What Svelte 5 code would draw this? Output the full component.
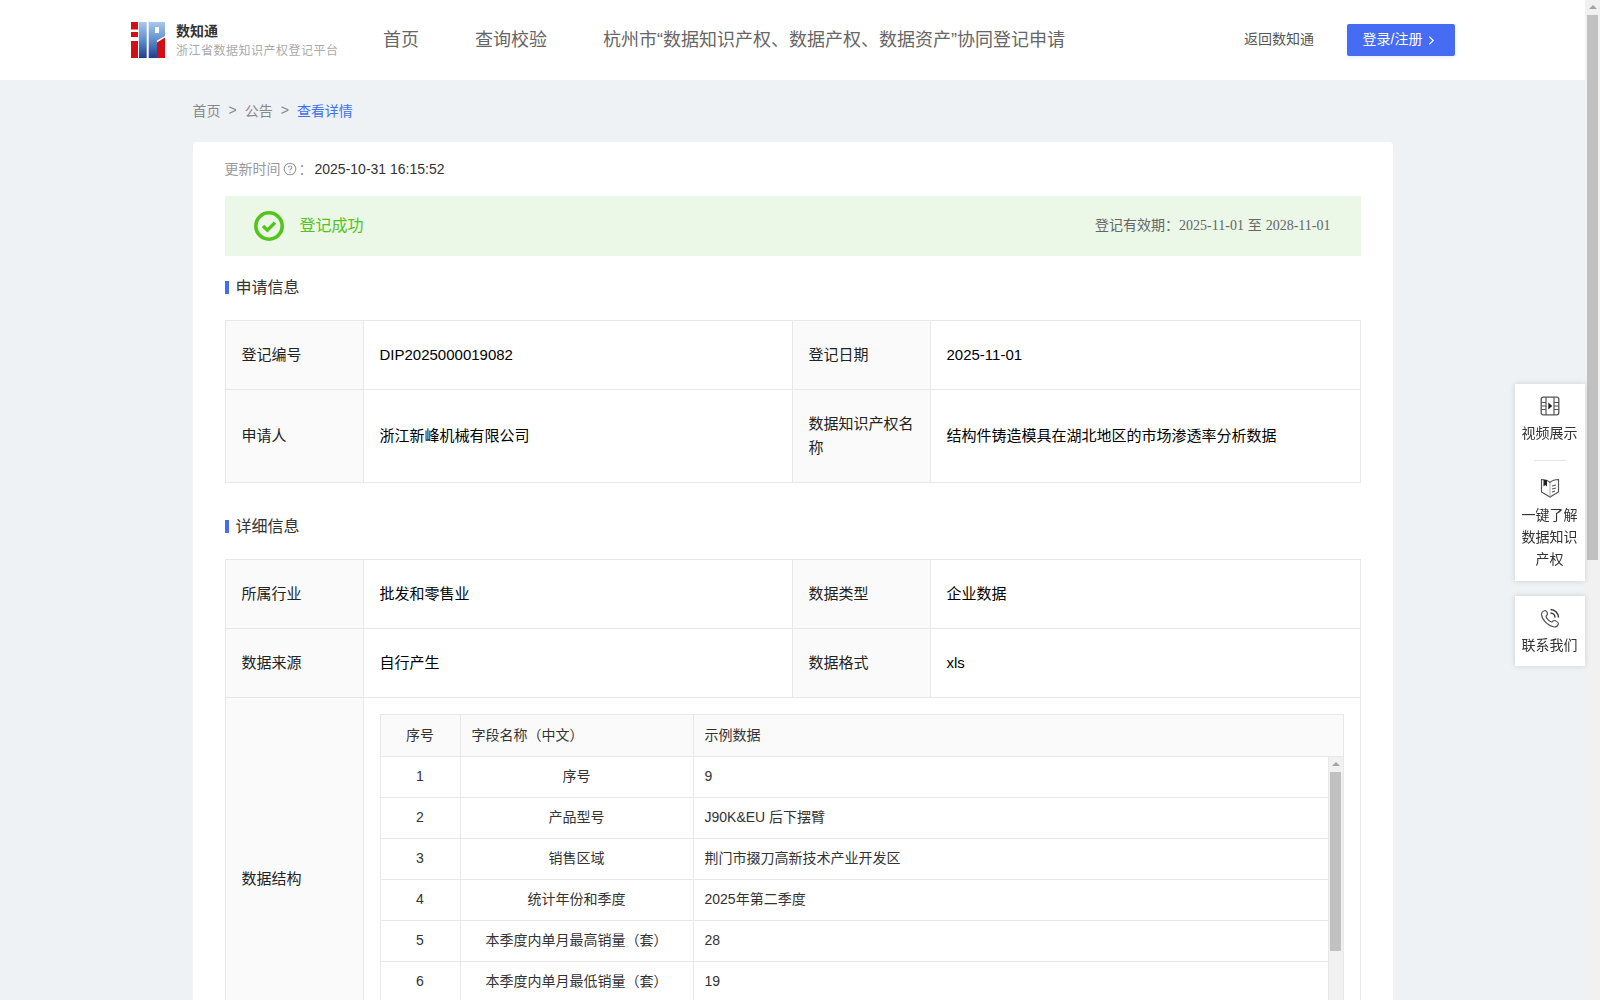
<script>
  const infoRows = [
    { n: 1, name: '序号', value: '9' },
    { n: 2, name: '产品型号', value: 'J90K&EU 后下摆臂' },
    { n: 3, name: '销售区域', value: '荆门市掇刀高新技术产业开发区' },
    { n: 4, name: '统计年份和季度', value: '2025年第二季度' },
    { n: 5, name: '本季度内单月最高销量（套）', value: '28' },
    { n: 6, name: '本季度内单月最低销量（套）', value: '19' }
  ];
</script>

<div class="shell">
  <div class="page">
    <header>
      <div class="brand">
        <svg class="logo" viewBox="0 0 34 36" width="34" height="36">
          <defs>
            <linearGradient id="blue" x1="0" y1="0" x2="0" y2="1">
              <stop offset="0" stop-color="#a9c8ec" />
              <stop offset="0.5" stop-color="#5f8fd0" />
              <stop offset="1" stop-color="#1f3c8c" />
            </linearGradient>
          </defs>
          <rect x="0" y="0" width="7" height="7.500" fill="#d40f14" />
          <rect x="0" y="10" width="7" height="5" fill="#d40f14" />
          <rect x="0" y="19" width="7" height="17" fill="#d40f14" />
          <rect x="8" y="0" width="7.700" height="36" fill="url(#blue)" />
          <path d="M17.700 0H34V14L26 18.500V36H17.700Z" fill="url(#blue)" />
          <rect x="24" y="5" width="4" height="6" fill="#fff" />
          <path d="M26 20.500L34 15.500V36H26Z" fill="#d40f14" />
        </svg>
        <div class="brand-text">
          <div class="brand-name">数知通</div>
          <div class="brand-sub">浙江省数据知识产权登记平台</div>
        </div>
      </div>
      <nav>
        <a href="#home">首页</a>
        <a href="#check">查询校验</a>
        <a href="#apply">杭州市“数据知识产权、数据产权、数据资产”协同登记申请</a>
      </nav>
      <div class="actions">
        <a class="back" href="#back">返回数知通</a>
        <button class="login">登录/注册
          <svg viewBox="0 0 8 12" width="7" height="11"><path d="M1.500 1.500L6 6L1.500 10.500" fill="none" stroke="#fff" stroke-width="1.400" /></svg>
        </button>
      </div>
    </header>

    <main>
      <div class="crumbs">
        <span>首页</span><i>&gt;</i><span>公告</span><i>&gt;</i><span class="current">查看详情</span>
      </div>

      <section class="card">
        <div class="updated">
          <span class="muted">更新时间</span>
          <svg viewBox="0 0 14 14" width="14" height="14">
            <circle cx="7" cy="7" r="5.800" fill="none" stroke="#999" stroke-width="1.100" />
            <path d="M5.300 5.600C5.300 3.400 8.800 3.500 8.800 5.600C8.800 7 7 6.900 7 8.400" fill="none" stroke="#999" stroke-width="1.100" />
            <circle cx="7" cy="10.100" r="0.700" fill="#999" />
          </svg>
          <span class="muted colon">：</span>
          <span>2025-10-31 16:15:52</span>
        </div>

        <div class="banner">
          <div class="status">
            <svg viewBox="0 0 30 30" width="30" height="30">
              <circle cx="15" cy="15" r="13.200" fill="none" stroke="#52c41a" stroke-width="3.600" />
              <path d="M9 15L13.400 19.200L21 11.600" fill="none" stroke="#52c41a" stroke-width="3.400" />
            </svg>
            <span>登记成功</span>
          </div>
          <div class="validity">登记有效期：<em>2025-11-01</em> 至 <em>2028-11-01</em></div>
        </div>

        <h3>申请信息</h3>
        <div class="grid">
          <div class="label">登记编号</div>
          <div class="value">DIP2025000019082</div>
          <div class="label">登记日期</div>
          <div class="value">2025-11-01</div>
          <div class="label">申请人</div>
          <div class="value">浙江新峰机械有限公司</div>
          <div class="label">数据知识产权名称</div>
          <div class="value">结构件铸造模具在湖北地区的市场渗透率分析数据</div>
        </div>

        <h3 class="second">详细信息</h3>
        <div class="grid">
          <div class="label">所属行业</div>
          <div class="value">批发和零售业</div>
          <div class="label">数据类型</div>
          <div class="value">企业数据</div>
          <div class="label">数据来源</div>
          <div class="value">自行产生</div>
          <div class="label">数据格式</div>
          <div class="value">xls</div>
          <div class="label">数据结构</div>
          <div class="value wide">
            <div class="fields">
              <div class="fields-head">
                <div class="c1">序号</div>
                <div class="c2 left">字段名称（中文）</div>
                <div class="c3">示例数据</div>
              </div>
              <div class="fields-body">
                <div class="fields-rows">
                  {#each infoRows as row}
                    <div class="fields-row">
                      <div class="c1">{row.n}</div>
                      <div class="c2">{row.name}</div>
                      <div class="c3">{row.value}</div>
                    </div>
                  {/each}
                </div>
                <div class="inner-bar">
                  <div class="arrow"></div>
                  <div class="inner-thumb"></div>
                </div>
              </div>
            </div>
          </div>
        </div>
      </section>
    </main>
  </div>

  <div class="page-bar">
    <div class="arrow"></div>
    <div class="page-thumb"></div>
  </div>
</div>

<aside>
  <div class="side-box">
    <button class="side-item">
      <svg viewBox="0 0 20 20" width="20" height="20">
        <rect x="1.200" y="1.200" width="17.600" height="17.600" rx="2" fill="none" stroke="#555" stroke-width="1.300" />
        <path d="M6 1V19M14 1V19M1 6.500H6M1 10H6M1 13.500H6M14 6.500H19M14 10H19M14 13.500H19" fill="none" stroke="#555" stroke-width="1.200" />
        <path d="M8.300 6.500L12.300 10L8.300 13.500Z" fill="#222" />
      </svg>
      <span>视频展示</span>
    </button>
    <div class="side-line"></div>
    <button class="side-item">
      <svg viewBox="0 0 20 20" width="20" height="20">
        <path d="M1.500 1.500C4.500 1.500 8 2.500 10 4.500C12 2.500 15.500 1.500 18.500 1.500V14L10 19L1.500 14Z" fill="none" stroke="#555" stroke-width="1.200" />
        <path d="M10 4.500V19" fill="none" stroke="#999" stroke-width="0.800" />
        <path d="M3.500 2H7V8.500L5.200 7L3.500 8.500Z" fill="#222" />
        <path d="M12 8L16 7M12 11L16 10M12 14L15 13" fill="none" stroke="#555" stroke-width="1.200" />
      </svg>
      <span>一键了解数据知识产权</span>
    </button>
  </div>
  <div class="side-box">
    <button class="side-item">
      <svg viewBox="0 0 20 20" width="20" height="20">
        <path d="M5 2.500C3 3 1.500 4.500 1.500 6.500C2 12 8.500 18.500 14.500 19C16.500 19 18 17.500 18.500 15.500C18.500 14.500 15.500 12.500 14 12.500C13 12.500 12.500 14 11.500 14C9.500 13.500 6.500 10.500 6 8.500C6 7.500 7.500 7 7.500 6C7.500 4.500 6 2.500 5 2.500Z" fill="none" stroke="#555" stroke-width="1.200" />
        <path d="M10.500 5C13 5 15 7 15 9.500M10.500 1.500C14.500 1.500 18.500 5 18.500 9.500" fill="none" stroke="#333" stroke-width="1.500" />
      </svg>
      <span>联系我们</span>
    </button>
  </div>
</aside>

<style>
  :global(body) {
    background: #eef2f5;
    font-family: 'Liberation Sans', 'Noto Sans CJK SC', sans-serif;
    color: #333;
  }

  .shell {
    display: flex;
    height: 100vh;
    overflow: hidden;
  }

  .page {
    flex: 1;
    min-width: 0;
  }

  .page-bar {
    width: 15px;
    background: #f1f1f1;
    display: flex;
    flex-direction: column;
    align-items: center;
  }

  .arrow {
    flex: none;
    width: 0;
    height: 0;
    margin: 5px 0 6px;
    border: solid transparent;
    border-width: 0 4px 4px;
    border-bottom-color: #a3a3a3;
  }

  .page-thumb {
    width: 11px;
    height: 545px;
    background: #c1c1c1;
  }

  header {
    height: 80px;
    background: #fff;
    display: flex;
    align-items: center;
    padding: 0 130px 0 131px;
  }

  .brand {
    display: flex;
    align-items: center;
    gap: 11px;
    width: 252px;
  }

  .brand-name {
    font-size: 14px;
    font-weight: 700;
    line-height: 20px;
    padding-top: 1px;
  }

  .brand-sub {
    font-size: 12px;
    letter-spacing: 0.5px;
    line-height: 20px;
    color: #aaa;
  }

  nav {
    display: flex;
    gap: 56px;
    flex: 1;
    padding-bottom: 4px;
  }

  nav a {
    font-size: 18px;
    color: #666;
    text-decoration: none;
  }

  .actions {
    display: flex;
    align-items: center;
    gap: 33px;
  }

  .back {
    font-size: 14px;
    color: #555;
    text-decoration: none;
    padding-bottom: 4px;
  }

  .login {
    width: 108px;
    height: 32px;
    border: 0;
    border-radius: 2px;
    background: #456cf2;
    color: #fff;
    font: inherit;
    font-size: 14px;
    display: flex;
    align-items: center;
    justify-content: center;
    gap: 6px;
    padding: 0 4px 5px 0;
    box-shadow: 0 2px 4px rgba(69, 108, 242, 0.1);
  }

  .login svg {
    margin-top: 5px;
  }

  main {
    width: 1200px;
    margin: 0 auto;
  }

  .crumbs {
    height: 62px;
    box-sizing: border-box;
    padding-bottom: 3px;
    display: flex;
    align-items: center;
    font-size: 14px;
    color: #888;
  }

  .crumbs i {
    font-style: normal;
    margin: 0 8px;
  }

  .current {
    color: #3f6ef5;
  }

  .card {
    background: #fff;
    border-radius: 4px;
    padding: 0 32px 32px;
  }

  .updated {
    height: 54px;
    display: flex;
    align-items: center;
    font-size: 14px;
    gap: 2px;
  }

  .muted {
    color: #999;
    padding-bottom: 3px;
  }

  .colon {
    width: 14px;
  }

  .banner {
    height: 60px;
    background: #ebf7e7;
    display: flex;
    align-items: center;
    justify-content: space-between;
    padding: 0 30px 0 29px;
  }

  .status {
    display: flex;
    align-items: center;
    gap: 16px;
    font-size: 16px;
    color: #52c41a;
  }

  .status span {
    padding-bottom: 4px;
  }

  .validity {
    font-size: 14px;
    color: #666;
    padding-bottom: 4px;
  }

  .validity em {
    font-style: normal;
    font-family: 'Liberation Serif', serif;
  }

  h3 {
    margin: 0;
    height: 60px;
    padding-bottom: 4px;
    display: flex;
    align-items: center;
    gap: 7px;
    font-size: 16px;
    font-weight: 400;
  }

  h3::before {
    content: '';
    width: 4px;
    height: 13px;
    margin-top: 3px;
    background: #456cf2;
  }

  .second {
    margin-top: 12px;
  }

  .grid {
    display: grid;
    grid-template-columns: 138px 429px 138px 1fr;
    border: solid #e8e8e8;
    border-width: 1px 1px 0 1px;
    font-size: 15px;
    line-height: 24px;
    color: #000;
  }

  .grid > div {
    border-bottom: 1px solid #e8e8e8;
    padding: 22px 16px;
  }

  .label {
    background: #fafafa;
    border-right: 1px solid #e8e8e8;
    display: flex;
    align-items: center;
    color: #222;
  }

  .value {
    display: flex;
    align-items: center;
    border-right: 1px solid #e8e8e8;
  }

  .value:nth-child(4n) {
    border-right: 0;
  }

  .grid > .wide {
    grid-column: span 3;
    padding: 16px;
    display: block;
    border-right: 0;
  }

  .fields {
    font-size: 14px;
    line-height: 20px;
    color: #333;
    border: 1px solid #e8e8e8;
  }

  .fields-head {
    display: flex;
    background: #fafafa;
    height: 41px;
    border-bottom: 1px solid #e8e8e8;
  }

  .fields-body {
    display: flex;
    height: 286px;
  }

  .fields-rows {
    flex: 1;
    min-width: 0;
  }

  .fields-row {
    display: flex;
    height: 40px;
    border-bottom: 1px solid #e8e8e8;
  }

  .inner-bar {
    width: 15px;
    box-sizing: border-box;
    background: #f1f1f1;
    border-left: 1px solid #e8e8e8;
    display: flex;
    flex-direction: column;
    align-items: center;
  }

  .inner-thumb {
    width: 11px;
    height: 179px;
    background: #c1c1c1;
  }

  .c1,
  .c2,
  .c3 {
    display: flex;
    align-items: center;
    padding: 0 11px 2px;
    box-sizing: border-box;
  }

  .c1 {
    width: 80px;
    justify-content: center;
    border-right: 1px solid #e8e8e8;
  }

  .c2 {
    width: 233px;
    justify-content: center;
    border-right: 1px solid #e8e8e8;
  }

  .c2.left {
    justify-content: flex-start;
  }

  .c3 {
    flex: 1;
  }

  aside {
    position: fixed;
    right: 15px;
    top: 384px;
    width: 70px;
    display: flex;
    flex-direction: column;
    gap: 15px;
  }

  .side-box {
    background: #fff;
    box-shadow: 0 0 6px rgba(0, 0, 0, 0.14);
    padding: 12px 0 11px;
  }

  .side-box:last-child {
    padding-bottom: 10px;
  }

  .side-item {
    display: flex;
    flex-direction: column;
    align-items: center;
    gap: 6px;
    width: 100%;
    border: 0;
    background: none;
    padding: 0 5px 0 4px;
    font: inherit;
    font-size: 14px;
    line-height: 22px;
    color: #333;
  }

  .side-line {
    width: 32px;
    height: 1px;
    background: #e4e4e4;
    margin: 16px auto 17px;
  }
</style>
